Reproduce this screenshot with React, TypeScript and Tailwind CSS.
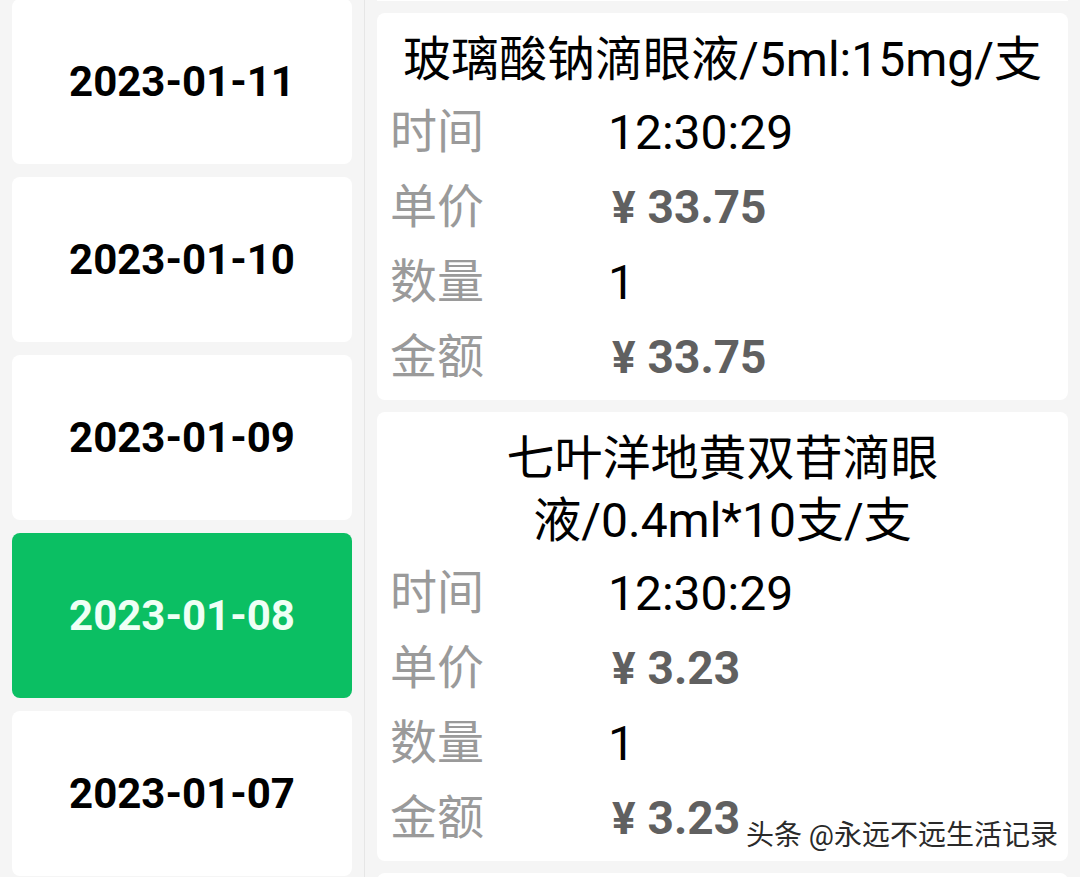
import React from 'react';

const dates = ['2023-01-11', '2023-01-10', '2023-01-09', '2023-01-08', '2023-01-07'];

const items = [
  {
    title: ['玻璃酸钠滴眼液/5ml:15mg/支'],
    time: '12:30:29',
    price: '33.75',
    qty: '1',
    total: '33.75',
  },
  {
    title: ['七叶洋地黄双苷滴眼', '液/0.4ml*10支/支'],
    time: '12:30:29',
    price: '3.23',
    qty: '1',
    total: '3.23',
  },
];

const font = { fontFamily: 'Roboto, "Noto Sans CJK SC", sans-serif' };

function Row({ label, children }: { label: string; children: React.ReactNode }) {
  return (
    <div className="flex h-[75px] items-center">
      <span className="w-[218px] shrink-0 text-[47px] text-[#9a9a9a]">{label}</span>
      {children}
    </div>
  );
}

function Price({ value }: { value: string }) {
  return (
    <span className="pl-1 text-[46px] font-bold text-[#606060]">
      <span className="mr-3 text-[44px]">¥</span>
      {value}
    </span>
  );
}

export default function App() {
  return (
    <div className="relative flex h-[877px] w-[1080px] overflow-hidden bg-[#f5f5f5]" style={font}>
      {/* date list */}
      <div className="flex w-[365px] shrink-0 flex-col gap-[13px] border-r border-[#e6e6e6] px-3 -mt-px">
        {dates.map((d) => {
          const active = d === '2023-01-08';
          return (
            <div
              key={d}
              className={
                active
                  ? 'flex h-[165px] shrink-0 items-center justify-center rounded-lg bg-[#0bbf63] text-[42px] font-bold text-[#effff5]'
                  : 'flex h-[165px] shrink-0 items-center justify-center rounded-lg bg-white text-[42px] font-bold text-black'
              }
            >
              {d}
            </div>
          );
        })}
      </div>

      {/* order details */}
      <div className="flex flex-1 flex-col gap-3 px-3">
        <div className="h-px shrink-0 bg-white" />
        {items.map((it, i) => (
          <div key={i} className="shrink-0 rounded-lg bg-white px-[13px] pb-[5px] pt-4">
            <div className="mb-1 text-center text-[48px] leading-[62px] text-black">
              {it.title.map((t) => (
                <div key={t}>{t}</div>
              ))}
            </div>
            <Row label="时间">
              <span className="text-[48px] text-black">{it.time}</span>
            </Row>
            <Row label="单价">
              <Price value={it.price} />
            </Row>
            <Row label="数量">
              <span className="text-[48px] text-black">{it.qty}</span>
            </Row>
            <Row label="金额">
              <Price value={it.total} />
            </Row>
          </div>
        ))}
        <div className="h-10 shrink-0 rounded-lg bg-white" />
      </div>

      {/* watermark */}
      <div
        className="absolute bottom-[20px] right-[22px] text-[28px] text-[#2a2a2a]"
        style={{ textShadow: '0 0 2px #fff, 0 0 2px #fff' }}
      >
        头条 @永远不远生活记录
      </div>
    </div>
  );
}
